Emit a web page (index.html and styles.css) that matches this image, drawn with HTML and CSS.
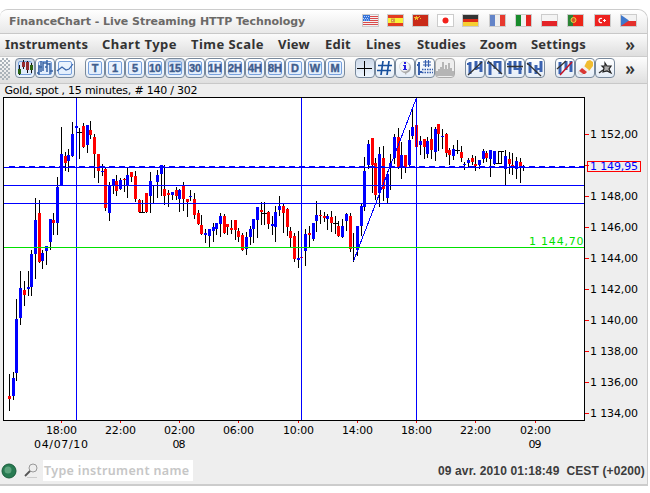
FILE: index.html
```html
<!DOCTYPE html>
<html lang="en">
<head>
<meta charset="utf-8">
<title>FinanceChart</title>
<link rel="stylesheet" href="styles.css">
</head>
<body>
<main class="window">
  <header class="titlebar">
    <h1 class="title">FinanceChart - Live Streaming HTTP Technology</h1>
    <div class="flags">
      <svg class="flag" viewBox="0 0 15 11"><path fill="#f4f1f1" d="M0 0h15v11H0z"/><path stroke="#d94b4b" d="M0 1.5h15M0 3.5h15M0 5.5h15M0 7.5h15M0 9.5h15"/><path fill="#3472d8" d="M0 0h7v6H0z"/><path stroke="#b9d2ff" stroke-dasharray="1 1" d="M1 1.5h6M0 3.5h6M1 5h6"/></svg>
      <svg class="flag" viewBox="0 0 15 11"><path fill="#e33b20" d="M0 0h15v11H0z"/><path fill="#f8f238" d="M0 3h15v5H0z"/><path fill="#d59a3c" d="M3 3.500h4v4H3z"/><path fill="#f7df9d" d="M4 5h1v1H4z"/></svg>
      <svg class="flag" viewBox="0 0 15 11"><path fill="#c92a18" d="M0 0h15v11H0z"/><path fill="#f2b82c" d="M3 1h1v1h2v1H5v2H4V4H3v1H2V3H1V2h2zM6 1h1v1H6zM7 3h1v1H7z"/></svg>
      <svg class="flag" viewBox="0 0 15 11"><path fill="#fff" d="M0 0h15v11H0z"/><circle cx="7.500" cy="5.500" r="3" fill="#f3211b"/></svg>
      <svg class="flag" viewBox="0 0 15 11"><path fill="#333" d="M0 0h15v4H0z"/><path fill="#dc2b16" d="M0 4h15v3H0z"/><path fill="#f6cf32" d="M0 7h15v4H0z"/></svg>
      <svg class="flag wide" viewBox="0 0 15 11"><path fill="#6384c8" d="M0 0h5v11H0z"/><path fill="#eee" d="M5 0h5v11H5z"/><path fill="#e7392f" d="M10 0h5v11h-5z"/></svg>
      <svg class="flag wide" viewBox="0 0 15 11"><path fill="#188b2c" d="M0 0h5v11H0z"/><path fill="#f2f2f2" d="M5 0h5v11H5z"/><path fill="#e32420" d="M10 0h5v11h-5z"/></svg>
      <svg class="flag wide" viewBox="0 0 15 11"><path fill="#f4f4f4" d="M0 0h15v6H0z"/><path fill="#e42428" d="M0 6h15v5H0z"/></svg>
      <svg class="flag wide" viewBox="0 0 15 11"><path fill="#ec2518" d="M0 0h15v11H0z"/><path fill="#2c8435" d="M0 0h5v11H0z"/><circle cx="5.500" cy="5" r="2.500" fill="#d4572a" stroke="#f1d143"/></svg>
      <svg class="flag wide" viewBox="0 0 15 11"><path fill="#ed2220" d="M0 0h15v11H0z"/><path fill="none" stroke="#fff" stroke-width="1.300" d="M7 3.500C3 2 3 9 7 7.500"/><path fill="#fff" d="M8 5h1V4h1v1h1v1h-1v1H9V6H8z"/></svg>
      <svg class="flag wide" viewBox="0 0 15 11"><path fill="#f2f2f2" d="M0 0h15v6H0z"/><path fill="#e4302c" d="M0 6h15v5H0z"/><path fill="#3f78cc" d="M0 0l8 5.500L0 11z"/></svg>
    </div>
  </header>
  <nav class="menubar">
    <span class="m-instruments">Instruments</span><span class="m-chart">Chart Type</span><span class="m-time">Time Scale</span><span class="m-view">View</span><span class="m-edit">Edit</span><span class="m-lines">Lines</span><span class="m-studies">Studies</span><span class="m-zoom">Zoom</span><span class="m-settings">Settings</span>
    <b class="more">»</b>
  </nav>
  <div class="toolbar">
    <i class="grip"></i>
    <div class="group">
      <button class="tool framed active"><svg viewBox="0 0 20 20"><path stroke="#111" d="M4.500 7v10M8.500 2v9M12.500 3v12M16.500 5v10"/><path fill="#2b6411" d="M3 11h3v5H3zM15 7h3v5h-3z"/><path fill="#942c30" d="M7 4h3v5H7zM11 4h3v8h-3z"/></svg></button>
      <button class="tool framed"><svg viewBox="0 0 20 20"><path fill="none" stroke="#3963a4" stroke-width="1.500" d="M2 15h2V7M4 17V9h3M6 3v11M8 4v9M8 5h4M12 2v12M10 9h2M15 5v11M12 6h3M15 13h3"/></svg></button>
      <button class="tool framed"><svg viewBox="0 0 20 20"><path fill="none" stroke="#3965aa" stroke-width="1.200" d="M2 13l5-4 4 3 3-1 4-5"/></svg></button>
    </div>
    <div class="group">
      <button class="tool framed">T</button><button class="tool framed">1</button><button class="tool framed">5</button><button class="tool framed">10</button><button class="tool framed active">15</button><button class="tool framed">30</button><button class="tool framed">1H</button><button class="tool framed">2H</button><button class="tool framed">4H</button><button class="tool framed">8H</button><button class="tool framed">D</button><button class="tool framed">W</button><button class="tool framed">M</button>
    </div>
    <div class="group">
      <button class="tool active"><svg viewBox="0 0 20 20"><path stroke="#000" d="M2 10.500h15M9.500 3v15"/></svg></button>
      <button class="tool"><svg viewBox="0 0 20 20"><path stroke="#164f9d" stroke-width="1.700" d="M8 3L6 17M14 3l-2 14M3 7.500h14M2 12.500h14"/></svg></button>
      <button class="tool"><svg viewBox="0 0 20 20"><path fill="#aaa" d="M9 14l2 3 1-4z"/><circle cx="10.500" cy="9.500" r="5.500" fill="#aaa"/><circle cx="9.500" cy="8.500" r="5" fill="#f6f6f6" stroke="#ccc" stroke-width=".6"/><path fill="#2720e0" d="M9 4h2v2H9zM8 7h3v4h1v1H8v-1h1V8H8z"/></svg></button>
      <button class="tool"><svg viewBox="0 0 20 20"><path fill="none" stroke="#355eae" stroke-width="2" d="M4 4v13M2 7h2M4 14h3"/><path stroke="#355eae" stroke-width="1.200" d="M10.500 2v7M13.500 2v7M8 4h8M8 7h8"/><path stroke="#355eae" stroke-width="1.300" stroke-dasharray="1.500 1" d="M7 11.500h11M7 14.500h11"/></svg></button>
      <button class="tool disabled"><svg viewBox="0 0 20 20"><path fill="#b5b5b5" d="M1 18v-5h2v-2h2V9h2V4h2v7h1V7h2v4h1V5h2v5h2v3h2v5z"/></svg></button>
    </div>
    <div class="group">
      <button class="tool"><svg viewBox="0 0 20 20"><path fill="none" stroke="#3a62b0" stroke-width="3" d="M5 4v12M11 3v9M16 3v11"/><path stroke="#3a62b0" stroke-width="2" d="M2 6h3M11 10h5"/><path stroke="#333" stroke-width="1.300" d="M3 17L17 4"/></svg></button>
      <button class="tool"><svg viewBox="0 0 20 20"><path fill="none" stroke="#3a62b0" stroke-width="3" d="M5 4v13M10 3v8M15 3v13"/><path stroke="#3a62b0" stroke-width="2" d="M2 5h4M10 4h5"/><path stroke="#333" stroke-width="1.300" d="M3 3l14 13"/></svg></button>
      <button class="tool"><svg viewBox="0 0 20 20"><path fill="none" stroke="#3a62b0" stroke-width="3" d="M5 3v13M10 3v9M15 3v13"/><path stroke="#3a62b0" stroke-width="2" d="M2 6h3M10 11h7"/><path stroke="#333" stroke-width="1.300" d="M2 8.500h16"/></svg></button>
      <button class="tool"><svg viewBox="0 0 20 20"><path fill="none" stroke="#3a62b0" stroke-width="3" d="M5 4v11M11 7v9M16 3v11"/><path stroke="#3a62b0" stroke-width="2" d="M2 6h3M11 11h6"/><path stroke="#333" stroke-width="1.300" d="M2 5l14 13"/></svg></button>
    </div>
    <div class="group">
      <button class="tool"><svg viewBox="0 0 20 20"><path fill="none" stroke="#3a62b0" stroke-width="3" d="M5 4v12M11 3v9M16 3v11"/><path stroke="#333" stroke-width="1.300" d="M2 11l9-8"/><path stroke="#c51225" stroke-width="1.500" d="M5 17L17 4"/></svg></button>
      <button class="tool"><svg viewBox="0 0 20 20"><path fill="#f1bd32" d="M12 3l3-1 3 2v4l-4 5-5-4z"/><path fill="#f4f0ee" d="M9 8l5 4-2 2-5-4z"/><path fill="#d93834" d="M7 10l5 4-2 2H7l-3-3z"/><path fill="#eee" stroke="#bbb" stroke-width=".5" d="M4 13l4 3-2 1-3-2z"/></svg></button>
      <button class="tool"><svg viewBox="0 0 20 20"><path fill="#aaa" stroke="#222" stroke-width="1.200" d="M10 5l2 3 4 0-2 3 2 4-4-2-4 1 1-4-2-2h3z"/><path stroke="#333" stroke-width="1.300" d="M8 12l-4 3"/></svg></button>
    </div>
    <b class="more">»</b>
  </div>
  <svg class="chart" viewBox="0 84 647 374" id="chart">
    <text x="4.500" y="94" textLength="193">Gold, spot , 15 minutes, # 140 / 302</text>
    <rect class="plot" x="3.500" y="97.500" width="581" height="323"/>
    <g id="candles"></g>
    <path class="guide" d="M4 167.500h580M4 185.500h580M4 203.500h580M76.500 98v322M301.500 98v322M416.500 98v322M353.500 261L416.500 98"/>
    <path class="guide dashed" d="M9 166.500h575"/>
    <path class="level" d="M4 247.500h580"/>
    <text class="level-label" x="529" y="245" textLength="54.500">1 144,70</text>
    <g id="axes"></g>
    <rect class="price-box" x="587.500" y="161.500" width="53" height="10"/>
    <text class="price" x="590" y="170" textLength="48">1 149,95</text>
  </svg>
  <footer class="status">
    <svg class="led" viewBox="0 0 16 16"><circle cx="8" cy="8" r="7" fill="#287b52" stroke="#175c39"/><circle cx="7" cy="7" r="3.500" fill="#5ca37d"/></svg>
    <svg class="search" viewBox="0 0 16 16"><path stroke="#ccc" stroke-width="1" d="M4 14.500h10"/><circle cx="10" cy="5" r="4" fill="#eee" stroke="#999"/><path stroke="#555" stroke-width="1.800" d="M7 8l-5 5"/></svg>
    <div class="field">Type instrument name</div>
    <time class="clock">09 avr. 2010 01:18:49&nbsp; CEST (+0200)</time>
  </footer>
</main>
<script src="chart.js"></script>
</body>
</html>
```
FILE: styles.css
```css
* { box-sizing: border-box; }
body { margin: 0; background: #fff; }
svg { display: block; }
.window {
  width: 648px;
  height: 477px;
  margin-top: 9px;
  border: solid #ccc;
  border-width: 1px 1px 2px 0;
  border-radius: 8px 10px 0 0;
  background: #eee;
  overflow: hidden;
  display: flex;
  flex-direction: column;
}
.titlebar {
  height: 24px;
  border-bottom: 1px solid #c8c8c8;
  background: linear-gradient(#fff, #e8e8e8);
  display: flex;
  justify-content: space-between;
  align-items: center;
  padding: 0 10px 0 9px;
}
.title {
  margin: 0;
  font: bold 11px "DejaVu Sans", sans-serif;
  color: #6b6967;
  white-space: nowrap;
  letter-spacing: -0.04px;
}
.flags { display: flex; gap: 8px; margin-top: -2px; }
.flag { width: 17px; height: 13px; border: 1px solid #ccc; }
.flag.wide { margin-left: 1.3px; }
.menubar {
  height: 22px;
  background: linear-gradient(#fbfbfb, #dedede);
  display: flex;
  align-items: center;
  gap: 15px;
  padding: 0 0 2px 5px;
  font: bold 13px "Noto Sans", sans-serif;
  letter-spacing: 0.2px;
  color: #333;
  white-space: nowrap;
}
.m-instruments { width: 82px; }
.m-chart { width: 74px; letter-spacing: 0.5px; }
.m-time { width: 72px; letter-spacing: 0.45px; }
.m-view { width: 32px; }
.m-edit { width: 26px; }
.m-lines { width: 36px; }
.m-studies { width: 48px; }
.m-zoom { width: 36px; }
.m-settings { width: 55px; }
.more { margin-left: auto; padding: 2px 12px 0 0; font: 600 17px/20px "Noto Sans", sans-serif; letter-spacing: 0; color: #333; }
.toolbar {
  height: 28px;
  border-top: 1px solid #ccc;
  border-bottom: 1px solid #c8c8c8;
  background: linear-gradient(#fdfdfd, #dfdfdf);
  display: flex;
  align-items: center;
  gap: 10px;
  padding-bottom: 4px;
}
.grip {
  width: 10px;
  height: 22px;
  margin: 2px -5px 0 0;
  background: radial-gradient(circle at 1px 1px, #a9b1b8 0.7px, transparent 1px) 2px 0 / 4px 4px,
    radial-gradient(circle at 1px 1px, #a9b1b8 0.7px, transparent 1px) 0 2px / 4px 4px;
}
.group { display: flex; }
.tool {
  position: relative;
  z-index: 0;
  width: 20px;
  height: 20px;
  padding: 0;
  border: 1px solid #78899c;
  border-radius: 4px;
  background: linear-gradient(#fff, #e5edf7);
  font: bold 11px "Liberation Sans", sans-serif;
  color: #405d8d;
  -webkit-text-stroke: 0.4px #405d8d;
  display: grid;
  place-items: center;
  line-height: 1;
}
.tool svg { width: 20px; height: 20px; margin: -1px; }
.framed::before {
  content: "";
  position: absolute;
  inset: 2px;
  border: 1px solid #77a0dc;
  border-radius: 2px;
  background: #dcebff80;
  z-index: -1;
}
.active { background: linear-gradient(#ced9e8, #eef6ff); }
.disabled { border-color: #aaa; background: #eee; }
.chart { width: 647px; height: 374px; flex: none; font: 11px "DejaVu Sans", sans-serif; shape-rendering: crispEdges; }
.plot { fill: #fff; stroke: #000; }
.guide { fill: none; stroke: #00f; }
.dashed { stroke-dasharray: 6 4; }
.level { stroke: #00e000; }
.level-label { fill: #00e000; }
.price-box { fill: none; stroke: #f00; }
.price { fill: #00f; }
.tick { stroke: #f00; }
.wick { stroke: #000; }
.up { fill: #00f; }
.down { fill: #f00; }
.flat { fill: #000; }
.status { flex: 1; display: flex; align-items: center; padding: 0 2px 0 1px; margin-top: -1px; }
.led { width: 16px; height: 16px; }
.search { width: 16px; height: 16px; margin-left: 6px; }
.field {
  width: 150px;
  height: 21px;
  margin-left: 4px;
  padding-left: 1px;
  background: #fff;
  color: #c6c6c6;
  font: 600 12.5px/21px "Noto Sans", sans-serif;
  letter-spacing: 0.35px;
  white-space: nowrap;
}
.clock { margin-left: auto; font: bold 12px "Liberation Sans", sans-serif; letter-spacing: 0.13px; color: #3c3c3c; white-space: pre; }
```
FILE: chart.js
```js
// Each candle: x, high, low, body top, body bottom, direction (u/d/f), in plot pixels.
const candles = `9 374 411 396 399 d;13 372 400 378 396 u;16 299 381 319 373 u;20 271 325 288 318 u;24 281 306 290 295 d;28 271 296 287 289 u;31 250 296 254 287 u;35 198 279 220 254 u;39 200 263 213 262 d;42 250 269 253 261 u;46 246 265 246 251 u;50 219 250 219 242 u;53 213 235 220 223 d;57 177 235 187 223 u;61 127 185 154 186 u;65 152 171 156 163 d;68 149 172 155 161 u;72 122 157 134 156 u;76 126 128 126 128 u;79 128 159 132 133 f;83 123 148 126 147 d;87 125 153 125 145 u;90 121 139 130 135 d;94 134 178 137 154 d;98 154 183 154 171 d;102 164 176 171 172 u;105 168 211 169 208 d;109 182 221 186 213 u;113 179 194 179 186 u;116 175 196 181 191 d;120 178 190 180 189 u;124 178 192 179 180 d;127 168 198 175 186 u;131 172 182 172 177 d;135 171 202 176 199 d;139 199 213 200 212 d;142 200 213 212 213 f;146 193 213 193 212 d;150 172 213 181 196 u;153 185 204 185 186 u;157 170 198 175 182 u;161 165 196 165 174 u;164 165 205 189 196 d;168 190 207 193 195 d;172 192 200 192 195 u;176 187 200 190 196 d;179 189 212 190 199 u;183 182 211 186 199 d;187 199 217 199 202 d;190 190 201 196 197 u;194 193 219 199 215 d;198 210 225 213 224 d;201 215 235 225 234 d;205 229 243 233 235 u;209 229 247 229 236 u;213 223 242 227 231 u;216 223 235 223 229 u;220 213 237 216 224 u;224 214 234 216 233 d;227 224 235 224 227 d;231 220 234 228 230 d;235 220 240 220 230 d;238 228 242 231 237 d;242 233 251 235 250 d;246 232 255 237 249 u;250 226 245 229 237 u;253 219 243 219 229 u;257 207 238 207 220 u;261 202 225 210 212 d;264 202 225 213 214 f;268 211 229 212 224 d;272 216 235 224 226 u;275 206 242 212 227 u;279 196 216 206 210 u;283 204 233 206 213 d;287 208 236 209 227 d;290 227 247 231 238 d;294 233 262 236 259 d;298 231 268 258 260 u;301 257 258 257 258 d;305 229 266 234 251 u;309 226 247 233 235 d;313 223 241 223 239 u;316 201 232 215 221 u;320 210 224 215 216 d;324 212 222 216 218 d;327 214 230 216 219 u;331 211 232 217 223 d;335 216 234 223 224 f;338 221 237 226 236 d;342 219 238 226 237 u;346 213 231 214 221 u;350 213 252 216 249 d;353 233 262 247 248 f;357 226 256 226 250 u;361 204 236 206 226 u;364 157 211 171 207 u;368 140 169 144 165 u;372 138 193 138 165 d;375 158 200 163 195 d;379 147 207 154 193 u;383 146 201 158 189 d;387 171 203 174 198 u;390 154 190 163 168 u;394 134 164 137 158 u;398 128 169 137 168 d;401 142 179 155 167 u;405 155 173 155 168 d;409 130 167 140 165 u;412 110 139 127 136 u;416 125 147 125 147 d;420 136 155 141 145 u;424 139 159 139 147 d;427 137 158 141 154 u;431 127 159 139 150 d;435 127 161 129 152 u;438 124 151 124 134 d;442 129 149 136 137 u;446 133 157 134 153 d;449 148 165 150 155 d;453 145 160 149 156 u;457 140 154 150 151 f;461 146 162 152 158 d;464 162 170 164 165 u;468 158 167 160 163 u;472 155 165 158 162 d;475 156 171 164 166 d;479 160 169 160 165 u;483 149 163 151 159 u;486 151 162 153 158 d;490 150 177 150 159 u;494 151 165 151 164 u;498 151 164 163 164 f;501 151 164 151 152 f;505 150 185 156 169 u;509 152 174 159 164 d;512 153 175 165 167 d;516 157 179 161 169 u;520 158 183 162 167 d;523 165 171 167 168 u`;
const kinds = { u: "up", d: "down", f: "flat" };
document.getElementById("candles").innerHTML = candles.split(";").map(row => {
  const [x, high, low, top, bottom, kind] = row.split(" ");
  const left = kind === "f" ? x - 2 : x - 1;
  return `<path class="wick" d="M${+x + 0.5} ${high}V${low}"/><rect class="${kinds[kind]}" x="${left}" y="${top}" width="${kind === "f" ? 5 : 3}" height="${bottom - top}"/>`;
}).join("");

let axes = "";
for (let i = 0; i < 10; i++) {
  const y = 134 + i * 31;
  axes += `<path class="tick" d="M585 ${y + 0.5}h4"/>`;
  if (i !== 1) axes += `<text x="590" y="${y + 4}" textLength="48">1 ${152 - i * 2},00</text>`;
}
const times = [[61, "18:00", "04/07/10"], [120, "22:00"], [179, "02:00", "08"], [238, "06:00"], [298, "10:00"], [357, "14:00"], [416, "18:00"], [475, "22:00"], [535, "02:00", "09"]];
for (const [x, hour, day] of times) {
  axes += `<path class="tick" d="M${x + 0.5} 421v2"/><text x="${x + 0.5}" y="434" text-anchor="middle" textLength="31">${hour}</text>`;
  if (day) axes += `<text x="${x}" y="448" text-anchor="middle" textLength="${day.length > 2 ? 54 : 13}">${day}</text>`;
}
document.getElementById("axes").innerHTML = axes;
```
